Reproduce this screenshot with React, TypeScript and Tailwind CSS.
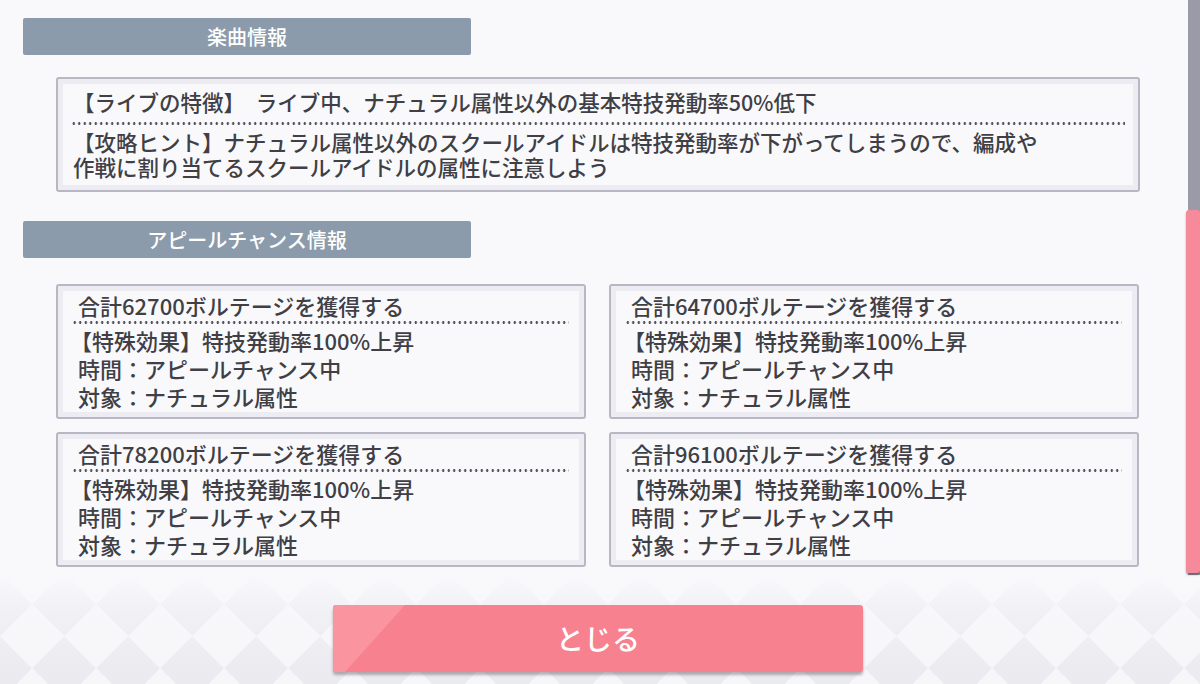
import React from 'react';

const chances = ['62700', '64700', '78200', '96100'];

const Dotted: React.FC<{ className?: string }> = ({ className = '' }) => (
  <div
    className={`h-[3px] bg-[radial-gradient(circle,#55555c_1.1px,transparent_1.5px)] bg-[length:5.5px_3px] bg-repeat-x ${className}`}
  />
);

const SectionHeader: React.FC<{ title: string }> = ({ title }) => (
  <div className="flex h-[37px] w-[448px] items-center justify-center rounded-[2px] bg-[#8c9bab] text-[20px] text-white">
    {title}
  </div>
);

const Frame: React.FC<{ children: React.ReactNode; className?: string }> = ({ children, className = '' }) => (
  <div className={`rounded-[3px] border-2 border-[#b8b8c4] bg-[#ececf2] p-[5px] ${className}`}>
    <div className="h-full bg-[#f9f9fc]">{children}</div>
  </div>
);

const ChanceCard: React.FC<{ total: string }> = ({ total }) => (
  <Frame className="h-[135px]">
    <div className="text-[22px] leading-[28px]">
      <div className="pl-[15px]">合計{total}ボルテージを獲得する</div>
      <Dotted className="mt-[2px] ml-[9px] mr-[10px]" />
      <div className="mt-[2px] pl-[7px]">【特殊効果】特技発動率100%上昇</div>
      <div className="pl-[15px]">時間：アピールチャンス中</div>
      <div className="pl-[15px]">対象：ナチュラル属性</div>
    </div>
  </Frame>
);

export default function App() {
  return (
    <div className="relative flex h-[684px] w-[1200px] flex-col overflow-hidden bg-[#f9f9fc] font-['Noto_Sans_CJK_JP','Noto_Sans',sans-serif] font-medium text-[#3f3f45]">
      <main className="flex-1 pt-[18px] pl-[23px]">
        <SectionHeader title="楽曲情報" />

        <Frame className="mt-[22px] ml-[33px] h-[115px] w-[1084px]">
          <div className="pt-[5px] text-[21.5px] leading-[25px]">
            <div className="pl-[10px]">【ライブの特徴】　ライブ中、ナチュラル属性以外の基本特技発動率50%低下</div>
            <Dotted className="mt-[8px] mx-[8px]" />
            <div className="mt-[4px] pl-[10px]">
              【攻略ヒント】ナチュラル属性以外のスクールアイドルは特技発動率が下がってしまうので、編成や
              <br />
              作戦に割り当てるスクールアイドルの属性に注意しよう
            </div>
          </div>
        </Frame>

        <div className="mt-[29px]">
          <SectionHeader title="アピールチャンス情報" />
        </div>

        <div className="mt-[26px] ml-[33px] grid w-[1083px] grid-cols-2 gap-x-[23px] gap-y-[13px]">
          {chances.map((c) => (
            <ChanceCard key={c} total={c} />
          ))}
        </div>
      </main>

      <footer className="relative flex h-[112px] justify-center bg-[conic-gradient(from_45deg,#e7e7ed_25%,#f6f6f9_0_50%,#e7e7ed_0_75%,#f6f6f9_0)] bg-[length:64px_64px] pt-[33px]">
        <div className="absolute inset-0 bg-[linear-gradient(to_bottom,#f9f9fc_0%,rgba(249,249,252,0.5)_40%,rgba(249,249,252,0.15)_100%)]" />
        <button className="relative ml-[-4px] flex h-[67px] w-[530px] items-center justify-center overflow-hidden rounded-[3px] bg-[#f8818f] text-[28px] text-white shadow-[0_3px_3px_rgba(60,40,50,0.35)]">
          <span className="absolute inset-0 bg-[#fa95a0] [clip-path:polygon(0_0,72px_0,12px_100%,0_100%)]" />
          <span className="relative -mt-[2px]">とじる</span>
        </button>
      </footer>

      {/* scroll indicator */}
      <div className="absolute top-0 right-0 h-[575px] w-[12px] bg-[#9a9aa8]" />
      <div className="absolute top-[210px] right-0 h-[363px] w-[14px] rounded-[3px] bg-[#f6899a] shadow-[0_2px_2px_rgba(0,0,0,0.35)]" />
    </div>
  );
}
